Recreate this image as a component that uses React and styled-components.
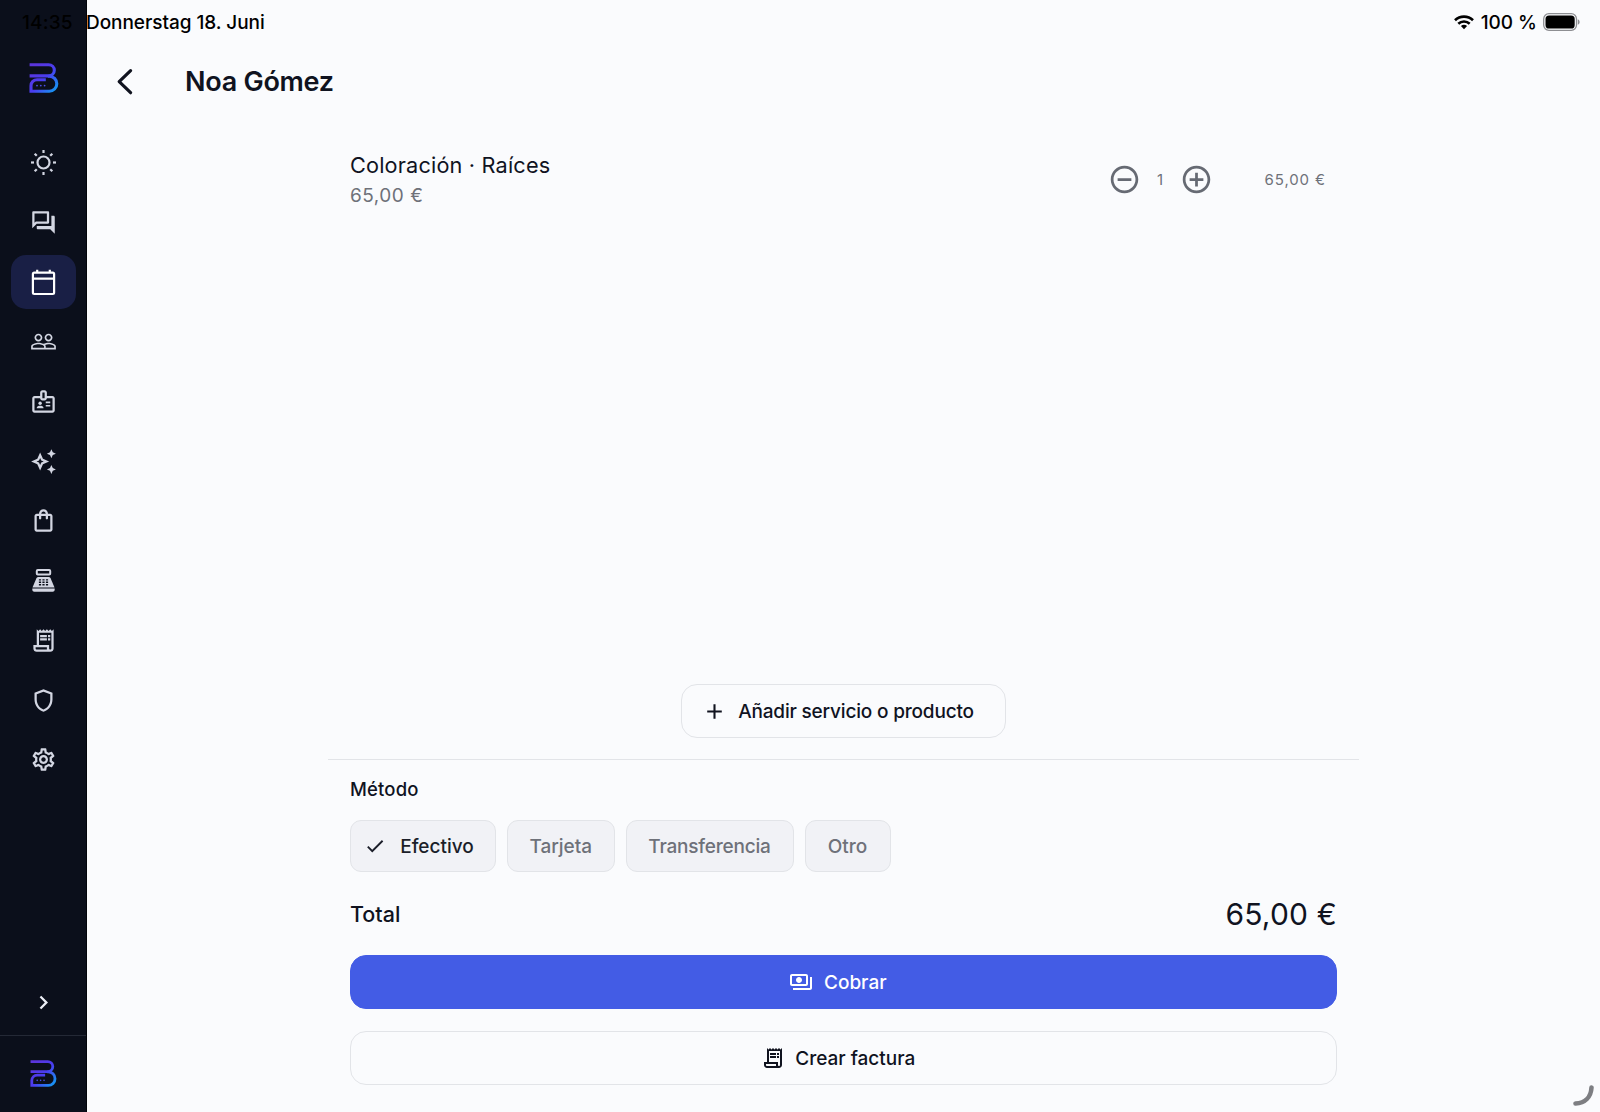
import { useState } from 'react';
import styled, { createGlobalStyle } from 'styled-components';
import {
  MdAdd,
  MdAddCircleOutline,
  MdCheck,
  MdChevronRight,
  MdOutlineAutoAwesome,
  MdOutlineBadge,
  MdOutlineForum,
  MdOutlinePayments,
  MdOutlineReceiptLong,
  MdOutlineSettings,
  MdOutlineShield,
  MdOutlineShoppingBag,
  MdPeopleOutline,
  MdRemoveCircleOutline,
} from 'react-icons/md';

const colors = {
  page: '#fafbfd',
  sidebar: '#0b0f1b',
  sidebarLine: '#242936',
  active: '#191f45',
  icon: '#d3d6e2',
  text: '#10131f',
  muted: '#6e7179',
  line: '#e2e4e8',
  chip: '#f1f2f6',
  primary: '#435ce5',
};

const GlobalStyle = createGlobalStyle`
  * {
    box-sizing: border-box;
  }
  body {
    margin: 0;
    background: ${colors.page};
    color: ${colors.text};
    font-family: Inter, 'Liberation Sans', sans-serif;
  }
  button {
    font-family: inherit;
    color: inherit;
    padding: 0;
    margin: 0;
  }
  svg {
    display: block;
    flex-shrink: 0;
  }
`;

const Screen = styled.div`
  position: relative;
  display: flex;
  width: 1600px;
  height: 1112px;
  overflow: hidden;
`;

// iOS status bar, lies over both the sidebar and the page
const StatusBar = styled.div`
  position: absolute;
  top: 0;
  left: 0;
  right: 0;
  display: flex;
  justify-content: space-between;
  height: 44px;
  padding: 0 20px 0 22px;
  color: #000;
  font-size: 19px;
  font-weight: 500;
  white-space: nowrap;
`;

const StatusGroup = styled.div`
  display: flex;
  align-items: center;
`;

const Clock = styled.span`
  width: 64px;
  padding-top: 1px;
  letter-spacing: 0.2px;
`;

const StatusDate = styled.span`
  padding-top: 1px;
  letter-spacing: -0.05px;
`;

const BatteryLevel = styled.span`
  margin: 0 6px 0 7px;
  padding-top: 1px;
`;

const Sidebar = styled.aside`
  display: flex;
  flex-direction: column;
  align-items: center;
  flex-shrink: 0;
  width: 87px;
  padding-top: 63px;
  background: ${colors.sidebar};
  border-right: 1px solid #02040a;
`;

const LogoLink = styled.div`
  padding-left: 1.5px;
`;

const Nav = styled.nav`
  display: flex;
  flex-direction: column;
  gap: 5.4px;
  margin-top: 42.7px;
`;

const NavItem = styled.button`
  display: flex;
  align-items: center;
  justify-content: center;
  width: 65px;
  height: 54.3px;
  border: none;
  border-radius: 15px;
  background: ${({ $active }) => ($active ? colors.active : 'transparent')};
  color: ${({ $active }) => ($active ? '#fff' : colors.icon)};
`;

const ExpandButton = styled.button`
  display: flex;
  align-items: center;
  justify-content: center;
  width: 65px;
  height: 40px;
  margin-top: auto;
  margin-bottom: 13px;
  border: none;
  background: transparent;
  color: #eceef5;
`;

const SidebarFooter = styled.div`
  display: flex;
  justify-content: center;
  width: 100%;
  height: 77px;
  padding-top: 24px;
  border-top: 1px solid ${colors.sidebarLine};
`;

const Main = styled.main`
  display: flex;
  flex-direction: column;
  align-items: center;
  flex: 1;
  padding-top: 55px;
`;

const Header = styled.header`
  display: flex;
  align-items: center;
  align-self: stretch;
  height: 54px;
  padding-left: 28px;
`;

const BackButton = styled.button`
  display: flex;
  width: 70px;
  border: none;
  background: transparent;
`;

const Title = styled.h1`
  margin: 0;
  font-size: 27px;
  font-weight: 600;
  line-height: 34px;
  letter-spacing: -0.27px;
`;

const ItemList = styled.section`
  flex: 1;
  width: 987px;
  padding-top: 40px;
`;

const ItemRow = styled.div`
  display: flex;
  align-items: center;
  padding-right: 11px;
`;

const ItemInfo = styled.div`
  flex: 1;
`;

const ItemName = styled.div`
  font-size: 21.7px;
  line-height: 33px;
  letter-spacing: 0.17px;
`;

const ItemPrice = styled.div`
  color: ${colors.muted};
  font-size: 19px;
  line-height: 27px;
  letter-spacing: 0.5px;
`;

const Stepper = styled.div`
  display: flex;
  align-items: center;
  color: ${colors.muted};
`;

const StepButton = styled.button`
  display: flex;
  border: none;
  background: transparent;
  color: #666a73;
`;

const Quantity = styled.span`
  width: 39px;
  font-size: 15px;
  text-align: center;
`;

const ItemTotal = styled.div`
  width: 113.5px;
  color: ${colors.muted};
  font-size: 15px;
  letter-spacing: 0.9px;
  text-align: right;
`;

const Button = styled.button`
  display: flex;
  align-items: center;
  justify-content: center;
  width: ${({ $width }) => $width};
  height: 54px;
  padding-right: 11px;
  flex-shrink: 0;
  border: 1px solid ${({ $primary }) => ($primary ? colors.primary : colors.line)};
  border-radius: 16px;
  background: ${({ $primary }) => ($primary ? colors.primary : 'transparent')};
  color: ${({ $primary }) => ($primary ? '#fff' : colors.text)};
  font-size: 19px;
  font-weight: 500;
  letter-spacing: ${({ $spacing }) => $spacing || '0'};
  gap: ${({ $gap }) => $gap || '10.5px'};
`;

const Checkout = styled.section`
  display: flex;
  flex-direction: column;
  width: 1031px;
  margin-top: 21px;
  padding: 17px 22px 27px;
  border-top: 1px solid ${colors.line};
`;

const MethodLabel = styled.div`
  font-size: 18.5px;
  font-weight: 500;
  line-height: 25px;
  letter-spacing: 0.15px;
`;

const Methods = styled.div`
  display: flex;
  gap: 11px;
  margin-top: 18px;
`;

const Chip = styled.button`
  display: flex;
  align-items: center;
  justify-content: center;
  width: ${({ $width }) => $width}px;
  height: 52px;
  padding-right: ${({ $selected }) => ($selected ? '8px' : '0')};
  border: 1px solid ${colors.line};
  border-radius: 11px;
  background: ${colors.chip};
  color: ${({ $selected }) => ($selected ? '#1b1e29' : colors.muted)};
  font-size: 19px;
  font-weight: 500;
  letter-spacing: ${({ $spacing }) => $spacing || 0}px;
  gap: 14px;
`;

const TotalRow = styled.div`
  display: flex;
  align-items: center;
  justify-content: space-between;
  height: 44px;
  margin: 20px 0 19px;
`;

const TotalLabel = styled.span`
  font-size: 21.5px;
  font-weight: 500;
`;

const TotalAmount = styled.span`
  font-size: 30px;
  letter-spacing: 0.2px;
`;

const Actions = styled.div`
  display: flex;
  flex-direction: column;
  gap: 22px;
`;

const CornerMark = styled.svg`
  position: absolute;
  right: 4px;
  bottom: 4px;
`;

const Logo = ({ id, size }) => (
  <svg width={size} height={size} viewBox="0 0 30 30" fill="none">
    <defs>
      <linearGradient id={id} x1="4" y1="4" x2="28" y2="26" gradientUnits="userSpaceOnUse">
        <stop offset="0" stopColor="#5b35dc" />
        <stop offset="0.5" stopColor="#4a3df0" />
        <stop offset="1" stopColor="#1597f3" />
      </linearGradient>
    </defs>
    <g stroke={`url(#${id})`} strokeWidth="3.1">
      <path d="M.6 1.7H19.7a5.6 5.6 0 0 1 0 11.2H.6" />
      <path d="M19 13.2h1.3a7.5 7.5 0 0 1 0 15H2V22.7a6 6 0 0 1 6-6h8.8" />
    </g>
    <g fill="#4b50e8">
      <circle cx="8" cy="22.6" r=".9" />
      <circle cx="11.8" cy="22.6" r=".9" />
      <circle cx="15.6" cy="22.6" r=".9" />
    </g>
  </svg>
);

const SunIcon = () => (
  <svg width="27" height="27" viewBox="0 0 27 27" fill="none" stroke="currentColor" strokeWidth="2.2">
    <circle cx="13.5" cy="13.5" r="6" />
    {[0, 45, 90, 135, 180, 225, 270, 315].map((angle) => (
      <path key={angle} d="M13.5 1v3" transform={`rotate(${angle} 13.5 13.5)`} />
    ))}
  </svg>
);

const CalendarIcon = () => (
  <svg width="27" height="27" viewBox="0 0 27 27" fill="none" stroke="currentColor" strokeWidth="2.2">
    <rect x="2.9" y="3.6" width="21.2" height="21.4" rx="1.4" />
    <path d="M3 9.6h21M7.2 .8v3M19.8 .8v3" />
  </svg>
);

const RegisterIcon = () => (
  <svg width="27" height="27" viewBox="0 0 27 27" fill="currentColor">
    <rect x="6.8" y="3.1" width="13.400" height="4.400" rx="1" fill="none" stroke="currentColor" strokeWidth="2" />
    <path d="M8.400 9.900h10.200c.8 0 1.500.4 1.900 1.200l4 9.300h-22l4-9.300c.4-.8 1.100-1.200 1.900-1.200z" />
    <path d="M2.300 21.400h22.400v1.300c0 1.200-.9 2-2 2H4.300c-1.100 0-2-.8-2-2z" />
    <path
      d="M8.900 12.900h9.200M8.900 15.300h9.200M8.900 17.700h9.200"
      stroke={colors.sidebar}
      strokeWidth="1.400"
      strokeDasharray="2.200 1.300"
    />
  </svg>
);

const BackIcon = () => (
  <svg width="20" height="28" viewBox="0 0 20 28" fill="none">
    <path
      d="M15.6 2.7 4.2 13.7l11.4 11"
      stroke="currentColor"
      strokeWidth="3.2"
      strokeLinecap="round"
      strokeLinejoin="round"
    />
  </svg>
);

const WifiIcon = () => (
  <svg width="20" height="15" viewBox="0 0 20 15" fill="none" stroke="#000" strokeWidth="2.6">
    <path d="M1 5.3a12.9 12.9 0 0 1 18 0" />
    <path d="M4.3 8.8a8.2 8.2 0 0 1 11.4 0" />
    <path d="M10 14.2 6.9 11.1a4.5 4.5 0 0 1 6.2 0z" fill="#000" stroke="none" />
  </svg>
);

const BatteryIcon = () => (
  <svg width="37" height="18" viewBox="0 0 37 18" fill="none">
    <rect x=".7" y=".7" width="32.8" height="16.6" rx="5.2" stroke="#8d8e92" strokeWidth="1.3" />
    <rect x="2.5" y="2.5" width="29.2" height="13" rx="3.6" fill="#000" />
    <path d="M34.8 6.2v5.6c1.2-.5 1.8-1.5 1.8-2.8s-.6-2.3-1.8-2.8z" fill="#8d8e92" />
  </svg>
);

const navItems = [
  { label: 'Hoy', icon: SunIcon },
  { label: 'Mensajes', icon: MdOutlineForum },
  { label: 'Calendario', icon: CalendarIcon },
  { label: 'Clientes', icon: MdPeopleOutline },
  { label: 'Equipo', icon: MdOutlineBadge },
  { label: 'Servicios', icon: MdOutlineAutoAwesome },
  { label: 'Productos', icon: MdOutlineShoppingBag },
  { label: 'Caja', icon: RegisterIcon },
  { label: 'Facturas', icon: MdOutlineReceiptLong },
  { label: 'Seguridad', icon: MdOutlineShield },
  { label: 'Ajustes', icon: MdOutlineSettings },
];

const methods = [
  { name: 'Efectivo', width: 146 },
  { name: 'Tarjeta', width: 107.5 },
  { name: 'Transferencia', width: 168, spacing: -0.2 },
  { name: 'Otro', width: 86 },
];

const App = () => {
  const [method, setMethod] = useState('Efectivo');

  return (
    <>
      <GlobalStyle />
      <Screen>
        <Sidebar>
          <LogoLink>
            <Logo id="logoTop" size={30} />
          </LogoLink>
          <Nav>
            {navItems.map(({ label, icon: Icon }) => (
              <NavItem key={label} aria-label={label} $active={label === 'Calendario'}>
                <Icon size={27} />
              </NavItem>
            ))}
          </Nav>
          <ExpandButton aria-label="Expandir">
            <MdChevronRight size={27} />
          </ExpandButton>
          <SidebarFooter>
            <Logo id="logoBottom" size={27} />
          </SidebarFooter>
        </Sidebar>

        <Main>
          <Header>
            <BackButton aria-label="Volver">
              <BackIcon />
            </BackButton>
            <Title>Noa Gómez</Title>
          </Header>

          <ItemList>
            <ItemRow>
              <ItemInfo>
                <ItemName>Coloración · Raíces</ItemName>
                <ItemPrice>65,00 €</ItemPrice>
              </ItemInfo>
              <Stepper>
                <StepButton aria-label="Quitar">
                  <MdRemoveCircleOutline size={33} />
                </StepButton>
                <Quantity>1</Quantity>
                <StepButton aria-label="Sumar">
                  <MdAddCircleOutline size={33} />
                </StepButton>
              </Stepper>
              <ItemTotal>65,00 €</ItemTotal>
            </ItemRow>
          </ItemList>

          <Button $width="325px" $gap="11px" $spacing="-0.18px">
            <MdAdd size={25} />
            Añadir servicio o producto
          </Button>

          <Checkout>
            <MethodLabel>Método</MethodLabel>
            <Methods>
              {methods.map(({ name, width, spacing }) => (
                <Chip
                  key={name}
                  $width={width}
                  $spacing={spacing}
                  $selected={name === method}
                  onClick={() => setMethod(name)}
                >
                  {name === method && <MdCheck size={22} />}
                  {name}
                </Chip>
              ))}
            </Methods>
            <TotalRow>
              <TotalLabel>Total</TotalLabel>
              <TotalAmount>65,00 €</TotalAmount>
            </TotalRow>
            <Actions>
              <Button $width="100%" $primary>
                <MdOutlinePayments size={24} />
                Cobrar
              </Button>
              <Button $width="100%">
                <MdOutlineReceiptLong size={24} />
                Crear factura
              </Button>
            </Actions>
          </Checkout>
        </Main>

        <StatusBar>
          <StatusGroup>
            <Clock>14:35</Clock>
            <StatusDate>Donnerstag 18. Juni</StatusDate>
          </StatusGroup>
          <StatusGroup>
            <WifiIcon />
            <BatteryLevel>100 %</BatteryLevel>
            <BatteryIcon />
          </StatusGroup>
        </StatusBar>

        <CornerMark width="24" height="24" viewBox="0 0 24 24" fill="none">
          <path d="M19.5 3.5C19 13 13 19 3.5 19.5" stroke="#7d7e82" strokeWidth="4.6" strokeLinecap="round" />
        </CornerMark>
      </Screen>
    </>
  );
};

export default App;
